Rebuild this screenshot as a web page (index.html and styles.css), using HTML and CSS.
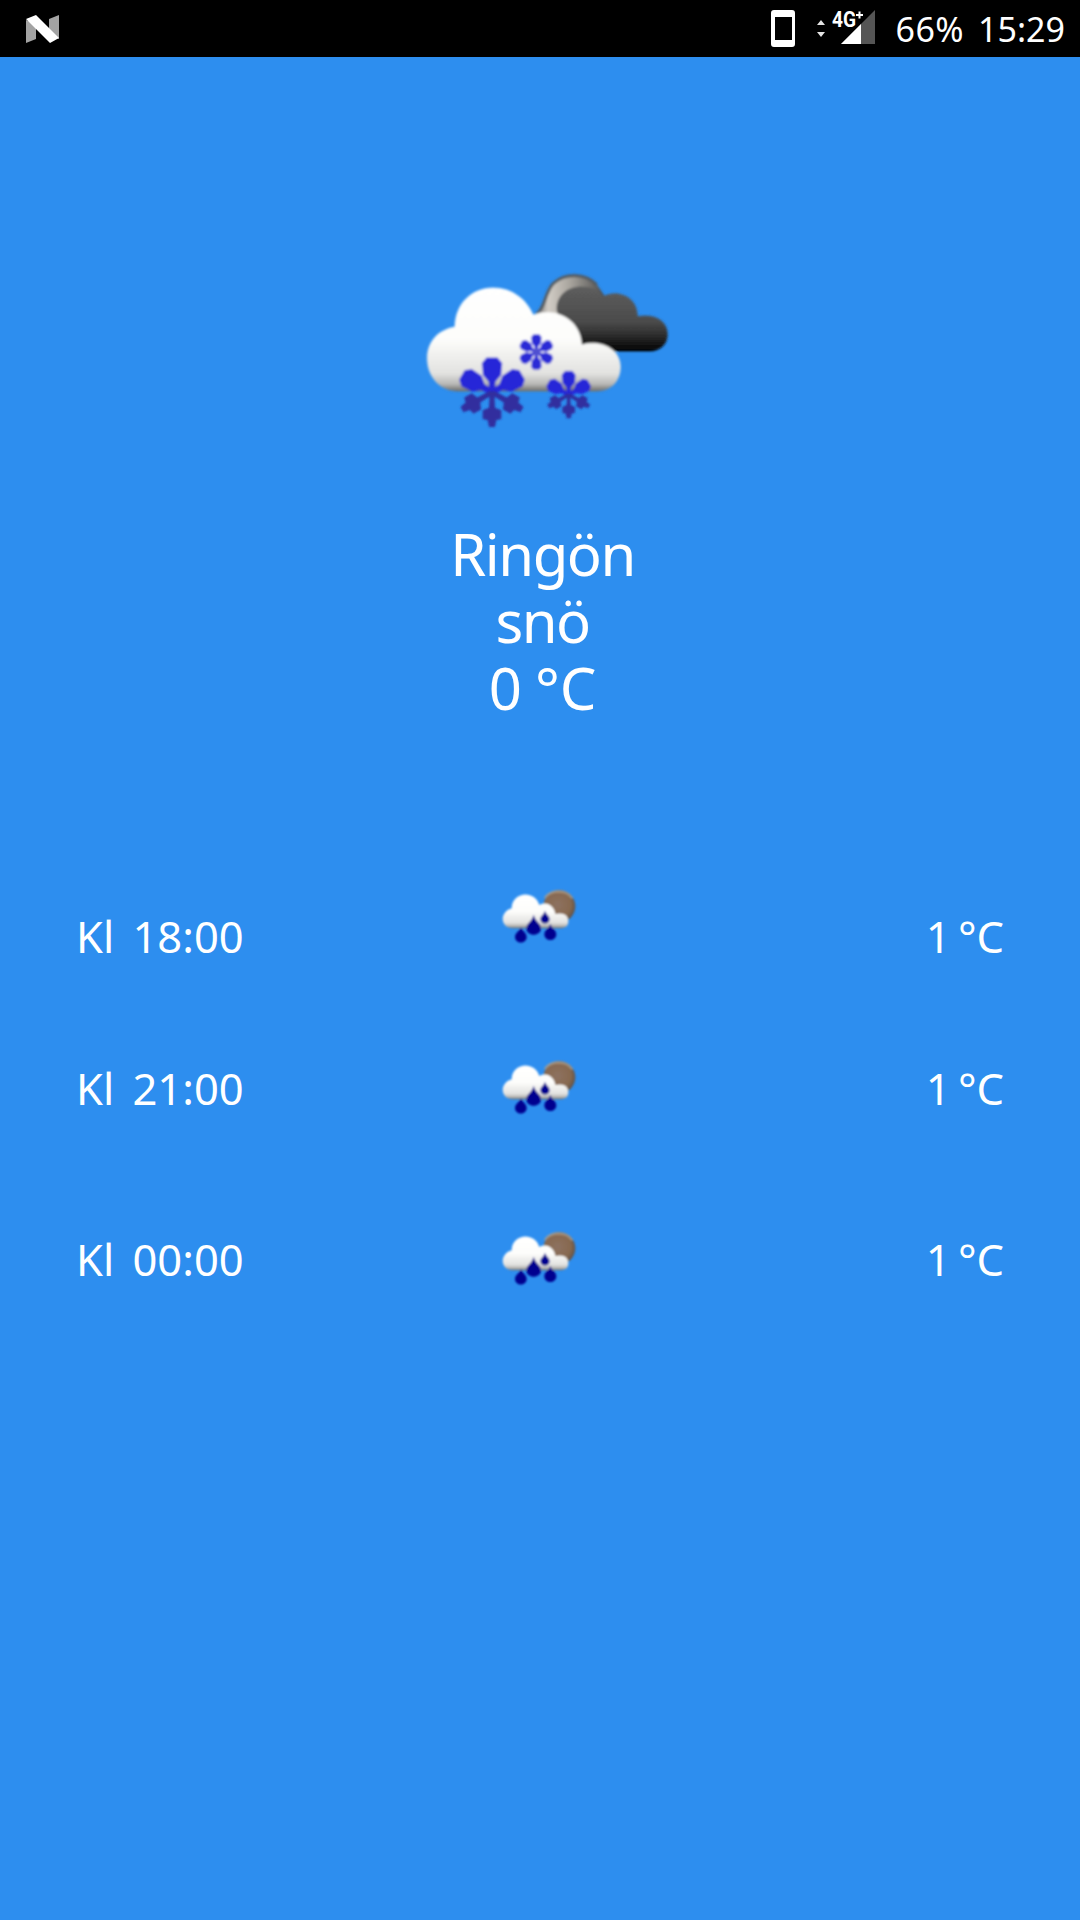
FILE: index.html
```html
<!DOCTYPE html>
<html lang="sv">
<head>
<meta charset="utf-8">
<title>Väder</title>
<link rel="stylesheet" href="styles.css">
</head>
<body>
<svg class="defs" width="0" height="0" aria-hidden="true">
  <defs>
    <linearGradient id="cloud" x1="0" y1="0" x2="0" y2="1">
      <stop offset="0" stop-color="#fff"/><stop offset=".5" stop-color="#fdfdfb"/>
      <stop offset=".83" stop-color="#e2e2e0"/><stop offset=".93" stop-color="#b8b8b6"/><stop offset="1" stop-color="#6c6b68"/>
    </linearGradient>
    <linearGradient id="dark" x1="0" y1="0" x2="0" y2="1">
      <stop offset="0" stop-color="#5e5e5e"/><stop offset=".55" stop-color="#4b4b4b"/><stop offset=".82" stop-color="#222"/><stop offset="1" stop-color="#000"/>
    </linearGradient>
    <radialGradient id="moon" cx=".45" cy=".45" r=".58">
      <stop offset="0" stop-color="#8d7160"/><stop offset=".7" stop-color="#87694f"/><stop offset="1" stop-color="#5e5047"/>
    </radialGradient>
    <linearGradient id="shine" x1="0" y1="0" x2="1" y2="0">
      <stop offset="0" stop-color="#666"/><stop offset=".2" stop-color="#d2cdc6"/><stop offset=".5" stop-color="#aaa69f"/><stop offset="1" stop-color="#494949"/>
    </linearGradient>
    <filter id="soft" x="-10%" y="-10%" width="120%" height="120%"><feGaussianBlur stdDeviation="3.5"/></filter>
    <path id="petal" d="M-8 0L-10 -32L-27 -52L-30 -88L-16 -104H16L30 -88L27 -52L10 -32L8 0Z"/>
    <g id="arm">
      <path d="M-7 0L-9 -46L-28 -54L-28 -80L-13 -84L-9 -104H9L13 -84L28 -80L28 -54L9 -46L7 0Z"/>
    </g>
    <g id="snow">
      <g fill="#2626d8">
        <use href="#petal"/>
        <use href="#petal" transform="rotate(-60)"/>
        <use href="#petal" transform="rotate(60)"/>
        <circle r="17"/>
      </g>
      <g fill="#302f9e">
        <use href="#arm" transform="rotate(180)"/>
        <use href="#arm" transform="rotate(-120)"/>
        <use href="#arm" transform="rotate(120)"/>
      </g>
    </g>
    <g id="snow-small">
      <g fill="#2c2cd6">
        <use href="#petal"/>
        <use href="#petal" transform="rotate(60)"/>
        <use href="#petal" transform="rotate(120)"/>
        <use href="#petal" transform="rotate(180)"/>
        <use href="#petal" transform="rotate(240)"/>
        <use href="#petal" transform="rotate(300)"/>
        <circle r="20" fill="#5050d0"/>
      </g>
    </g>
    <g id="rain" filter="url(#soft)">
      <circle cx="208" cy="79" r="48" fill="url(#moon)"/>
      <path d="M164 54Q176 35 205 34Q234 34 247 55" fill="none" stroke="#b3a18e" stroke-width="7" opacity=".75"/>
      <path d="M67 145C30 143 28 96 65 85C66 35 134 29 148 75C170 63 193 78 196 102C220 96 235 105 235 124C235 139 225 145 211 145Z" fill="url(#cloud)"/>
      <g fill="#06068f">
        <path d="M131 104C137 126 153 129 153 145C153 171 109 171 109 145C109 129 125 126 131 104Z"/>
        <path d="M93 141C96 152 110 158 110 171C110 193 75 193 75 171C75 158 90 152 93 141Z"/>
        <path d="M181 131C185 145 199 150 199 163C199 186 163 186 163 163C163 150 177 145 181 131Z"/>
        <path d="M165 92C168 104 179 107 179 118C179 135 151 135 151 118C151 107 162 104 165 92Z"/>
      </g>
    </g>
  </defs>
</svg>

<header class="status">
  <svg class="status-logo" viewBox="0 0 34 28" width="34" height="28">
    <path d="M0 5L10 9V24L0 28ZM23 4L33 0V24L23 20Z" fill="#a3a3a3"/>
    <path d="M0 4L10 0L33 23L24 28Z" fill="#fff"/>
  </svg>
  <svg class="status-icons" viewBox="0 -8 110 46" width="110" height="46">
    <path fill-rule="evenodd" fill="#fff" d="M3 0H21Q24 0 24 3V34Q24 37 21 37H3Q0 37 0 34V3Q0 0 3 0ZM4 7V30H21V7Z"/>
    <path d="M46 15L50 10L54 15ZM46 22L50 27L54 22Z" fill="#e4e4e4"/>
    <path d="M70 34L104 0V34Z" fill="#555"/>
    <path d="M70 34L90 14V34Z" fill="#fff"/>
    <text class="net" x="61" y="17" textLength="24" lengthAdjust="spacingAndGlyphs">4G</text>
    <path d="M85 5H92M88.500 1.500V8.500" stroke="#fff" stroke-width="2"/>
  </svg>
  <span class="battery">66%</span>
  <span class="clock">15:29</span>
</header>

<main class="weather">
  <section class="now">
    <svg class="now-icon" viewBox="0 0 810 540" width="270" height="180">
      <g filter="url(#soft)">
        <path d="M372 165C402 150 398 105 425 72C460 35 530 35 562 75L585 110L520 240H400Z" fill="url(#shine)"/>
        <path d="M378 162C405 150 402 100 430 70C465 38 525 38 560 74" fill="none" stroke="#565b60" stroke-width="9"/>
        <path d="M440 150C438 75 535 58 580 108C630 85 683 115 683 168C740 160 773 184 773 223C773 253 750 274 718 274H520L450 180Z" fill="url(#dark)"/>
        <path d="M140 394C84 390 50 346 51 292C53 243 84 210 134 200C135 133 183 83 249 83C308 83 350 119 370 164C438 139 512 178 516 253C576 236 632 268 632 320C632 365 602 394 560 394Z" fill="url(#cloud)"/>
        <use href="#snow" transform="translate(246 397)"/>
        <use href="#snow-small" transform="translate(379 276) scale(.51)"/>
        <use href="#snow" transform="translate(476 404) scale(.68)"/>
      </g>
    </svg>
    <div class="now-text">
      <div class="place">Ringön</div>
      <div class="condition">snö</div>
      <div class="temp">0 °C</div>
    </div>
  </section>

  <section class="forecast">
    <div class="row first">
      <span class="time">Kl <b>18:00</b></span>
      <svg class="row-icon" viewBox="0 0 300 225" width="100" height="75"><use href="#rain"/></svg>
      <span class="degrees">1 °C</span>
    </div>
    <div class="row">
      <span class="time">Kl <b>21:00</b></span>
      <svg class="row-icon" viewBox="0 0 300 225" width="100" height="75"><use href="#rain"/></svg>
      <span class="degrees">1 °C</span>
    </div>
    <div class="row">
      <span class="time">Kl <b>00:00</b></span>
      <svg class="row-icon" viewBox="0 0 300 225" width="100" height="75"><use href="#rain"/></svg>
      <span class="degrees">1 °C</span>
    </div>
  </section>
</main>
</body>
</html>
```
FILE: styles.css
```css
* { box-sizing: border-box; }
body {
  margin: 0;
  width: 1080px;
  height: 1920px;
  background: #2d8eef;
  color: #fff;
  font-family: "Noto Sans", sans-serif;
  overflow: hidden;
}
svg { display: block; }
.defs { position: absolute; }
.status {
  display: flex;
  align-items: flex-start;
  height: 57px;
  padding: 0 15px 0 26px;
  background: #000;
  font-size: 34px;
  line-height: 59px;
}
.status-logo { margin-top: 15px; }
.status-icons { margin: 2px 0 0 auto; }
.net { font: bold 22px Roboto, sans-serif; fill: #fff; }
.battery { margin-left: 14px; letter-spacing: .5px; }
.clock { margin-left: 14px; }
.now {
  display: flex;
  flex-direction: column;
  align-items: center;
  padding-top: 203px;
}
.now-icon { margin-left: 10px; }
.now-text {
  margin-top: 80px;
  padding-left: 5px;
  font-size: 58px;
  line-height: 67px;
  text-align: center;
}
.place { letter-spacing: -1.500px; }
.condition { letter-spacing: -1.500px; }
.temp { word-spacing: -2px; }
.forecast { margin-top: 159px; padding: 0 76px; }
.row {
  display: grid;
  grid-template-columns: 1fr 100px 1fr;
  height: 171px;
  font-size: 43.500px;
  line-height: 60px;
}
.time, .degrees { margin-top: 7px; }
.first .time, .first .degrees { margin-top: 26px; }
.time b { font-weight: 400; margin-left: 7px; }
.degrees { text-align: right; word-spacing: -4px; }
```
